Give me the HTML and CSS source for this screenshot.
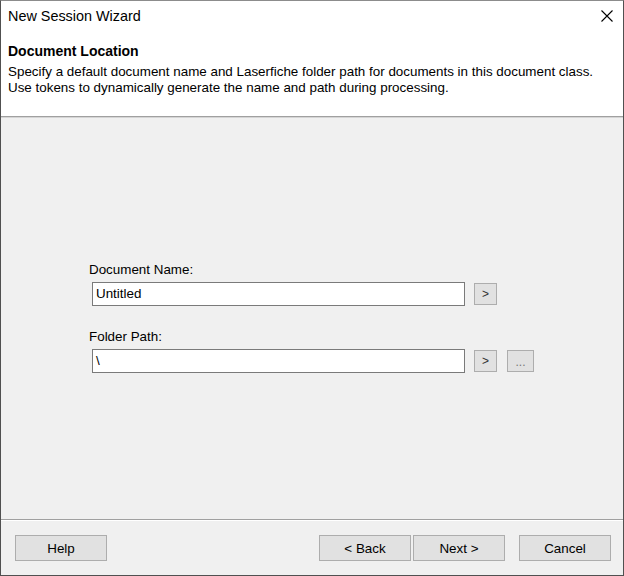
FILE: index.html
```html
<!DOCTYPE html>
<html>
<head>
<meta charset="utf-8">
<link rel="stylesheet" href="styles.css">
</head>
<body>
<div class="window">
  <div class="titlebar">
    <span class="title">New Session Wizard</span>
    <svg class="close" width="12" height="12" viewBox="0 0 12 12"><path d="M0.5 0.5 L11.5 11.5 M11.5 0.5 L0.5 11.5" stroke="#000" stroke-width="1.1" fill="none"/></svg>
  </div>
  <div class="header">
    <div class="heading">Document Location</div>
    <div class="desc">Specify a default document name and Laserfiche folder path for documents in this document class.<br>Use tokens to dynamically generate the name and path during processing.</div>
  </div>
  <div class="sep-top"></div>
  <div class="content">
    <div class="form">
      <div class="label">Document Name:</div>
      <div class="row">
        <div class="input">Untitled</div>
        <div class="sbtn">&gt;</div>
      </div>
      <div class="label label2">Folder Path:</div>
      <div class="row">
        <div class="input">\</div>
        <div class="sbtn">&gt;</div>
        <div class="sbtn dots">...</div>
      </div>
    </div>
  </div>
  <div class="sep-bottom"></div>
  <div class="footer">
    <div class="btn">Help</div>
    <div class="spacer"></div>
    <div class="btn">&lt; Back</div>
    <div class="btn next">Next &gt;</div>
    <div class="btn cancel">Cancel</div>
  </div>
</div>
</body>
</html>
```
FILE: styles.css
```css
html, body {
  margin: 0;
  padding: 0;
  background: #f0f0f0;
}
body {
  font-family: "Liberation Sans", Arial, sans-serif;
  font-size: 13.4px;
  color: #000;
}
.window {
  box-sizing: border-box;
  width: 624px;
  height: 576px;
  border: 1px solid #505050;
  border-top-color: #8c8c8c;
  display: flex;
  flex-direction: column;
  background: #f0f0f0;
}
.titlebar {
  height: 30px;
  background: #fff;
  display: flex;
  align-items: center;
  justify-content: space-between;
  padding: 0 10px 0 7px;
}
.title {
  font-size: 14.4px;
  line-height: 30px;
}
.close {
  display: block;
}
.header {
  background: #fff;
  padding: 12px 7px 20px 7px;
}
.heading {
  font-weight: bold;
  font-size: 14px;
  line-height: 16px;
  margin-bottom: 5px;
}
.desc {
  line-height: 16px;
  white-space: nowrap;
}
.sep-top {
  height: 1px;
  background: #a0a0a0;
  border-bottom: 1px solid #d5d5d5;
}
.content {
  flex: 1;
  background: #f0f0f0;
  padding: 144px 0 0 88px;
}
.label {
  line-height: 16px;
  margin-bottom: 4px;
}
.label2 {
  margin-top: 23px;
}
.row {
  display: flex;
  align-items: center;
  height: 24px;
}
.input {
  box-sizing: border-box;
  width: 373px;
  height: 24px;
  margin-left: 3px;
  background: #fff;
  border: 1px solid #7a7a7a;
  padding: 0 3px;
  line-height: 22px;
}
.sbtn {
  box-sizing: border-box;
  width: 23px;
  height: 22px;
  margin-left: 9px;
  background: #e1e1e1;
  border: 1px solid #adadad;
  font-size: 12px;
  line-height: 20px;
  text-align: center;
  color: #333;
}
.sbtn.dots {
  width: 27px;
  margin-left: 10px;
  color: #777;
  line-height: 22px;
}
.sep-bottom {
  height: 1px;
  background: #a0a0a0;
  border-bottom: 1px solid #fff;
}
.footer {
  height: 54px;
  box-sizing: border-box;
  padding: 14px 12px 0 14px;
  display: flex;
  align-items: flex-start;
}
.spacer {
  flex: 1;
}
.btn {
  box-sizing: border-box;
  width: 92px;
  height: 26px;
  background: #e1e1e1;
  border: 1px solid #adadad;
  text-align: center;
  line-height: 25px;
}
.next {
  margin-left: 2px;
}
.cancel {
  margin-left: 14px;
}
```
